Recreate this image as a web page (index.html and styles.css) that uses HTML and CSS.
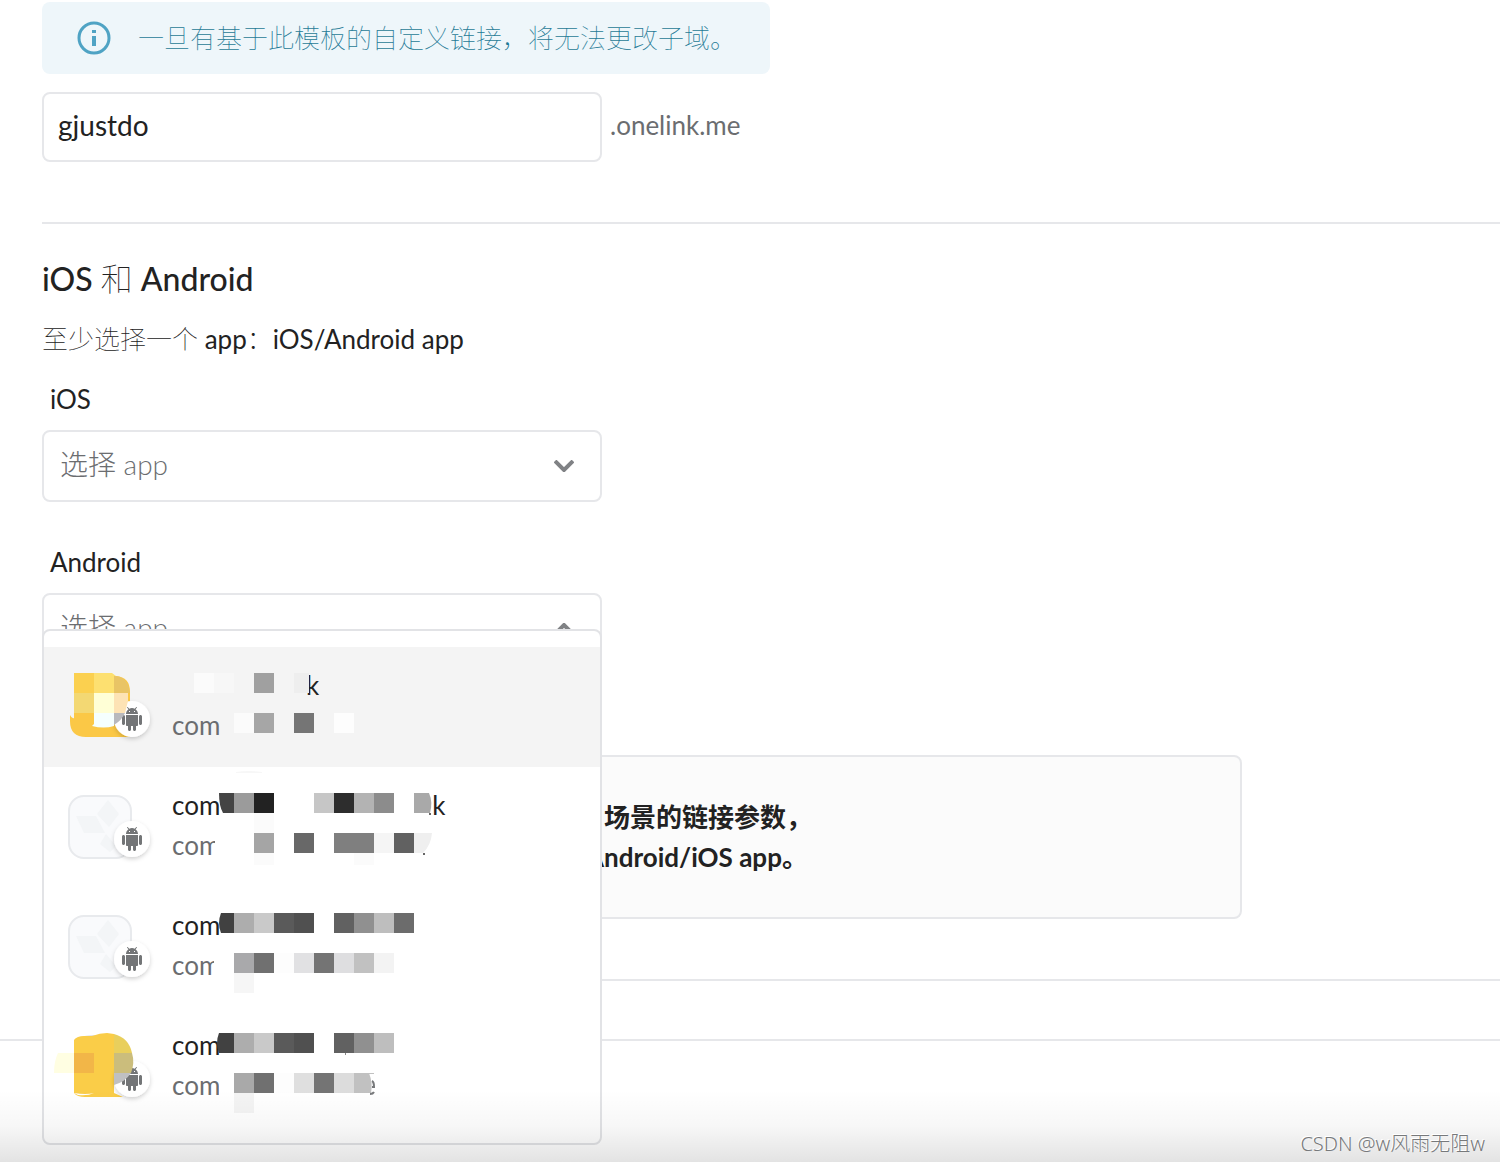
FILE: index.html
```html
<!DOCTYPE html>
<html lang="zh-CN">
<head>
<meta charset="utf-8">
<meta name="viewport" content="width=device-width, initial-scale=1">
<title>OneLink</title>
<link rel="stylesheet" href="styles.css">
</head>
<body>
<svg width="0" height="0" class="defs" aria-hidden="true">
  <defs>
    <filter id="lift" x="-30%" y="-30%" width="160%" height="170%">
      <feDropShadow dx="0" dy="2" stdDeviation="2" flood-color="#000" flood-opacity=".18"/>
    </filter>
    <g id="badge">
      <circle cx="88" cy="72" r="18" fill="#fff" filter="url(#lift)"/>
      <path transform="translate(76 60)" fill="#737577" d="M6 18c0 .55.45 1 1 1h1v3.5c0 .83.67 1.5 1.5 1.5s1.5-.67 1.5-1.5V19h2v3.5c0 .83.67 1.5 1.5 1.5s1.5-.67 1.5-1.5V19h1c.55 0 1-.45 1-1V8H6v10zM3.500 8C2.670 8 2 8.670 2 9.500v7c0 .83.67 1.5 1.5 1.5S5 17.330 5 16.500v-7C5 8.670 4.330 8 3.500 8zm17 0c-.83 0-1.5.67-1.5 1.5v7c0 .83.67 1.5 1.5 1.5s1.5-.67 1.5-1.5v-7c0-.83-.67-1.5-1.5-1.5zm-4.970-5.840l1.300-1.300c.2-.2.2-.51 0-.71-.2-.2-.51-.2-.71 0l-1.480 1.480C13.850 1.230 12.950 1 12 1c-.96 0-1.860.23-2.660.63L7.850.15c-.2-.2-.51-.2-.71 0-.2.2-.2.51 0 .71l1.310 1.310C6.970 3.260 6 5.010 6 7h12c0-1.990-.97-3.750-2.470-4.840zM10 5H9V4h1v1zm5 0h-1V4h1v1z"/>
    </g>
    <g id="placeholder">
      <rect x="25" y="29" width="62" height="62" rx="15" fill="#f9fafc" stroke="#e8eaed" stroke-width="2"/>
      <path fill="#f3f5f7" d="M64 33l11 14-10 13-12-13zM32 49h20l9 17H40zM62 67l10 12-6 6-10-8z"/>
    </g>
  </defs>
</svg>

<main class="page">
  <div class="notice">
    <svg class="notice-icon" width="34" height="34" viewBox="0 0 34 34" aria-hidden="true">
      <circle cx="17" cy="17" r="15" fill="none" stroke="#4fa3c4" stroke-width="3"/>
      <path fill="#4fa3c4" d="M15 9h4v3h-4zM15 15h4v10h-4z"/>
    </svg>
    <p class="notice-text">一旦有基于此模板的自定义链接，将无法更改子域。</p>
  </div>

  <div class="domain">
    <input class="control" type="text" value="gjustdo" aria-label="子域">
    <span class="suffix">.onelink.me</span>
  </div>

  <section class="apps">
    <h2 class="title">iOS <span class="thin">和</span> Android</h2>
    <p class="hint"><span class="thin">至少选择一个</span> app<span class="thin">：</span>iOS/Android app</p>

    <div class="field">
      <label class="label" for="ios">iOS</label>
      <div class="picker">
        <select class="control select" id="ios"><option>选择 app</option></select>
        <svg class="chevron" width="20" height="12" viewBox="0 0 20 12" aria-hidden="true"><path d="M1 1l9 9 9-9" fill="none" stroke="#808285" stroke-width="4"/></svg>
      </div>
    </div>

    <div class="field">
      <label class="label" for="android">Android</label>
      <div class="picker">
        <select class="control select" id="android"><option>选择 app</option></select>
        <svg class="chevron" width="20" height="12" viewBox="0 0 20 12" aria-hidden="true"><path d="M1 11l9-9 9 9" fill="none" stroke="#808285" stroke-width="4"/></svg>

        <ul class="menu" role="listbox" aria-label="Android">
          <li class="app active" role="option" aria-selected="true">
            <p class="name"><span class="tail-near">k</span></p>
            <p class="id">com</p>
            <svg class="art" width="420" height="120" viewBox="0 0 420 120" aria-hidden="true">
              <path fill="#fbc846" d="M26 68q2 4 4 3V40h40V29h2q14 1 14 16v45H42q-16 0-16-16z"/>
              <use href="#badge"/>
              <path fill="#fbd04f" d="M30 26h20v20H30z"/><path fill="#fde070" d="M50 26h18l4 3v17H50z"/>
              <path fill="#e9c465" d="M70 29q14 0 16 17H70z"/>
              <path fill="#f3d873" d="M30 46h20v20H30z"/><path fill="#ffffd6" d="M50 46h20v20H50z"/>
              <path fill="#fde3b5" d="M70 46h14v8l-3 12H70z"/><path fill="#f5fffe" d="M50 66h20v13q-10 3-22 0l2-2z"/>
              <path fill="#b8b9bd" d="M70 66h11q-3 7-11 12z"/>
              <path fill="#f4f4f4" d="M181 60h9v30h-9z"/>
              <g fill="#fbfbfb"><path d="M150 26h20v20h-20zM190 66h20v20h-20z"/></g>
              <path fill="#f7f7f7" d="M170 26h20v20h-20z"/><path fill="#a0a0a0" d="M210 26h20v20h-20z"/>
              <path fill="#eee" d="M250 26h15v20h-15z"/><path fill="#a6a6a6" d="M210 66h20v20h-20z"/>
              <path fill="#757575" d="M250 66h20v20h-20z"/><path fill="#fdfdfd" d="M290 66h20v20h-20z"/>
            </svg>
          </li>
          <li class="app" role="option" aria-selected="false">
            <p class="name">com<span class="tail-far">k</span></p>
            <p class="id">com</p>
            <svg class="art" width="420" height="120" viewBox="0 0 420 120" aria-hidden="true">
              <use href="#placeholder"/><use href="#badge"/>
              <path fill="#fff" d="M171 60h20v32h-20z"/>
              <path fill="#f7f7f7" d="M192 5q12-2 26 0v1h-26z"/>
              <path fill="#444" d="M175 26h15v20h-11q-4-7-4-20z"/><path fill="#9b9b9b" d="M190 26h20v20h-20z"/>
              <path fill="#222" d="M210 26h20v20h-20z"/><path fill="#c6c6c6" d="M270 26h20v20h-20z"/>
              <path fill="#2d2d2d" d="M290 26h20v20h-20z"/><path fill="#b3b3b3" d="M310 26h20v20h-20z"/>
              <path fill="#8c8c8c" d="M330 26h20v20h-20z"/><path fill="#a9a9a9" d="M370 26h15q4 9 1 20h-16z"/>
              <path fill="#fbfbfb" d="M210 46h20v20h-20zM210 86h20v12h-20zM310 86h20v12h-20z"/>
              <path fill="#a5a5a5" d="M210 66h20v20h-20z"/><path fill="#686868" d="M250 66h20v20h-20z"/>
              <path fill="#7f7f7f" d="M290 66h40v20h-40z"/><path fill="#f5f5f5" d="M330 66h20v20h-20z"/>
              <path fill="#616161" d="M350 66h20v20h-20z"/><path fill="#efefef" d="M370 66h18q-1 12-9 20h-9z"/>
              <path fill="#666" d="M379 86h2v2h-2zM385 46h2v2h-2z"/>
            </svg>
          </li>
          <li class="app" role="option" aria-selected="false">
            <p class="name">com</p>
            <p class="id">com</p>
            <svg class="art" width="420" height="120" viewBox="0 0 420 120" aria-hidden="true">
              <use href="#placeholder"/><use href="#badge"/>
              <path fill="#fff" d="M170 60h20v32h-20z"/>
              <path fill="#414141" d="M177 26h13v20h-13q-4-10 0-20z"/><path fill="#adadad" d="M190 26h20v20h-20z"/>
              <path fill="#c9c9c9" d="M210 26h20v20h-20z"/><path fill="#5a5a5a" d="M230 26h20v20h-20z"/>
              <path fill="#505050" d="M250 26h20v20h-20z"/><path fill="#616161" d="M290 26h20v20h-20z"/>
              <path fill="#909090" d="M310 26h20v20h-20z"/><path fill="#bebebe" d="M330 26h20v20h-20z"/>
              <path fill="#6c6c6c" d="M350 26h20v20h-20z"/>
              <path fill="#a9a9ab" d="M190 66h20v20h-20z"/><path fill="#707070" d="M210 66h20v20h-20z"/>
              <path fill="#fdfdfd" d="M230 66h20v20h-20z"/><path fill="#e1e1e3" d="M250 66h20v20h-20z"/>
              <path fill="#747474" d="M270 66h20v20h-20z"/><path fill="#dedee0" d="M290 66h20v20h-20z"/>
              <path fill="#c1c1c1" d="M310 66h20v20h-20z"/><path fill="#f3f3f3" d="M330 66h20v20h-20z"/>
              <path fill="#f6f6f6" d="M190 86h20v20h-20z"/>
            </svg>
          </li>
          <li class="app" role="option" aria-selected="false">
            <p class="name">com</p>
            <p class="id">com</p>
            <svg class="art" width="420" height="120" viewBox="0 0 420 120" aria-hidden="true">
              <path fill="#e2e4e8" d="M30 34q8-7 22-6l-2 3H32z"/>
              <path fill="#facd48" d="M30 33q3-4 10-4h8q8-3 15-3l7 1v59l9 4H41q-8 0-11-4z"/>
              <path fill="#fff" d="M30 86q12 2 20 0-6 3-16 2z"/>
              <use href="#badge"/>
              <path fill="#e9cf5c" d="M70 27q15 4 18 19H70z"/><path fill="#cbbd7c" d="M70 46h18q3 10-1 20H70z"/>
              <path fill="#bfc0c2" d="M70 66h17q-6 9-17 12z"/>
              <path fill="#fffee2" d="M14 46h16v20H10q0-12 4-20z"/><path fill="#f2b648" d="M30 46h20v20H30z"/>
              <path fill="#fff" d="M175 60h15v32h-15z"/>
              <path fill="#414141" d="M175 26h15v20h-15q-4-10 0-20z"/><path fill="#adadad" d="M190 26h20v20h-20z"/>
              <path fill="#c9c9c9" d="M210 26h20v20h-20z"/><path fill="#5a5a5a" d="M230 26h20v20h-20z"/>
              <path fill="#505050" d="M250 26h20v20h-20z"/><path fill="#616161" d="M290 26h20v20h-20z"/>
              <path fill="#909090" d="M310 26h20v20h-20z"/><path fill="#bebebe" d="M330 26h20v20h-20z"/>
              <path fill="#a9a9a9" d="M190 66h20v20h-20z"/><path fill="#707070" d="M210 66h20v20h-20z"/>
              <path fill="#fdfdfd" d="M230 66h20v20h-20z"/><path fill="#dfdfdf" d="M250 66h20v20h-20z"/>
              <path fill="#747474" d="M270 66h20v20h-20z"/><path fill="#dcdcdc" d="M290 66h20v20h-20z"/>
              <path fill="#c1c1c1" d="M310 66h15q4 10 2 20h-17zM325 66h5v1h-5z"/>
              <path fill="#f4f4f4" d="M190 86h20v20h-20z"/>
              <path d="M328 74q2 1 2 6h-2M326 87q3 0 4-2" fill="none" stroke="#77797b" stroke-width="2"/>
              <path fill="#888" d="M301 46h1v2h-1z"/>
            </svg>
          </li>
        </ul>
      </div>
    </div>

    <div class="summary">
      <p class="summary-lead">场景的链接参数，</p>
      <p>Android/iOS app。</p>
    </div>
  </section>
</main>
<footer class="footer">CSDN @w风雨无阻w</footer>
</body>
</html>
```
FILE: styles.css
```css
* {
  box-sizing: border-box;
}

body {
  display: flex;
  flex-direction: column;
  min-height: 100vh;
  margin: 0;
  background: #fff;
  color: #222;
  font-family: Lato, "Noto Sans CJK SC", sans-serif;
  font-size: 26px;
  line-height: 40px;
}

p,
h2,
ul {
  margin: 0;
  padding: 0;
}

.defs {
  position: absolute;
}

.thin {
  font-weight: 100;
}

.page {
  padding: 2px 0 58px 42px;
  border-bottom: 2px solid #e6e7ea;
}

.notice {
  display: flex;
  align-items: center;
  gap: 27px;
  max-width: 728px;
  min-height: 72px;
  padding: 0 16px 0 35px;
  border-radius: 8px;
  background: #eef6fa;
}

.notice-icon {
  flex: none;
}

.notice-text {
  color: #1f7a96;
  font-weight: 100;
}

.domain {
  display: flex;
  align-items: center;
  gap: 8px;
  padding: 18px 0 60px;
  border-bottom: 2px solid #e6e7ea;
  color: #6b6d70;
}

.suffix {
  padding-bottom: 4px;
}

.control {
  width: 560px;
  max-width: 100%;
  height: 70px;
  margin: 0;
  padding: 0 14px 4px;
  border: 2px solid #e6e7ea;
  border-radius: 8px;
  background: #fff;
  color: #222;
  font: inherit;
  font-size: 28px;
}

.title {
  padding-top: 35px;
  font-size: 32px;
  font-weight: 500;
}

.hint,
.field {
  margin-top: 20px;
}

.field + .field {
  margin-top: 40px;
}

.label {
  display: block;
  padding: 0 8px;
}

.picker {
  position: relative;
  display: grid;
  grid-template-columns: 1fr auto;
  align-items: center;
  width: 560px;
  max-width: 100%;
  margin-top: 11px;
}

.select {
  grid-area: 1 / 1 / 2 / 3;
  height: 72px;
  padding: 0 16px 4px;
  appearance: none;
  color: #6b6d70;
  font-weight: 300;
}

.chevron {
  grid-area: 1 / 2;
  margin-right: 28px;
  pointer-events: none;
}

.menu {
  position: absolute;
  top: 36px;
  left: 0;
  z-index: 1;
  width: 100%;
  padding: 16px 0;
  border: 2px solid #e2e3e6;
  border-radius: 8px;
  background: #fff;
  list-style: none;
}

.app {
  position: relative;
  height: 120px;
  padding: 18px 0 0 128px;
}

.active {
  background: #f4f4f4;
}

.name,
.id {
  min-height: 40px;
}

.id {
  color: #6b6d70;
}

.tail-near {
  margin-left: 134px;
}

.tail-far {
  margin-left: 212px;
}

.art {
  position: absolute;
  top: 0;
  left: 0;
}

.summary {
  max-width: 1200px;
  margin: 90px 0 60px;
  padding: 40px 40px 40px 542px;
  border: 2px solid #e6e7ea;
  border-radius: 8px;
  background: #fbfbfb;
  font-weight: 700;
}

.summary-lead {
  padding-left: 18px;
}

.apps::after {
  content: "";
  display: block;
  border-top: 2px solid #e6e7ea;
}

.footer {
  position: relative;
  display: flex;
  flex: 1;
  align-items: flex-end;
  justify-content: flex-end;
  z-index: 2;
  padding-right: 15px;
  background: linear-gradient(rgba(0, 0, 0, 0) 40%, rgba(0, 0, 0, .03) 70%, rgba(0, 0, 0, .11));
  color: #77797b;
  font-family: "Noto Sans", "Noto Sans CJK SC", sans-serif;
  font-size: 20px;
  font-weight: 300;
  line-height: 36px;
  text-shadow: -1px -1px #fff;
  pointer-events: none;
}
```
